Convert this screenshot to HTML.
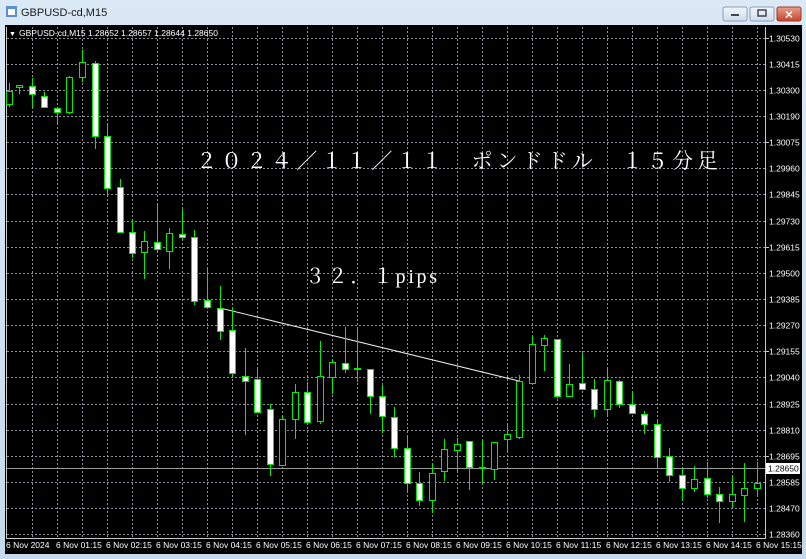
<!DOCTYPE html>
<html><head><meta charset="utf-8"><style>
html,body{margin:0;padding:0;width:806px;height:559px;overflow:hidden;background:#c9dcef}
svg{display:block}
</style></head><body>
<svg width="806" height="559" viewBox="0 0 806 559" xmlns="http://www.w3.org/2000/svg" font-family="Liberation Sans, sans-serif">
<defs>
<linearGradient id="tb" x1="0" y1="0" x2="0" y2="1"><stop offset="0" stop-color="#dbe8f6"/><stop offset="1" stop-color="#c5d8ec"/></linearGradient>
<linearGradient id="cl" x1="0" y1="0" x2="0" y2="1"><stop offset="0" stop-color="#e8a08f"/><stop offset="1" stop-color="#c8442c"/></linearGradient>
<linearGradient id="bt" x1="0" y1="0" x2="0" y2="1"><stop offset="0" stop-color="#f2f6fb"/><stop offset="1" stop-color="#cfdcea"/></linearGradient>
</defs>
<rect x="0" y="0" width="806" height="559" fill="url(#tb)"/>
<!-- title -->
<rect x="6" y="6" width="11" height="11" fill="#5d8fc8"/><rect x="8" y="9" width="7" height="6" fill="#fff"/>
<text x="21" y="16" font-size="11" fill="#1a1a1a">GBPUSD-cd,M15</text>
<rect x="723" y="7" width="24" height="14" rx="2" fill="url(#bt)" stroke="#8d9fb5"/><rect x="731" y="14" width="8" height="2" fill="#445"/>
<rect x="750" y="7" width="24" height="14" rx="2" fill="url(#bt)" stroke="#8d9fb5"/><rect x="758" y="10" width="8" height="6" fill="none" stroke="#445" stroke-width="1.5"/>
<rect x="777" y="7" width="24" height="14" rx="2" fill="url(#cl)" stroke="#9a3a2a"/><text x="789" y="18.5" font-size="11" font-weight="bold" fill="#fff" text-anchor="middle">✕</text>
<!-- chart area -->
<rect x="5" y="25" width="797" height="529" fill="#000"/>
<g shape-rendering="crispEdges">
<g stroke="#8a8f98" stroke-width="1" stroke-dasharray="2,2">
<line x1="7" y1="38.5" x2="765" y2="38.5"/><line x1="7" y1="64.5" x2="765" y2="64.5"/><line x1="7" y1="90.5" x2="765" y2="90.5"/><line x1="7" y1="116.5" x2="765" y2="116.5"/><line x1="7" y1="142.5" x2="765" y2="142.5"/><line x1="7" y1="168.5" x2="765" y2="168.5"/><line x1="7" y1="194.5" x2="765" y2="194.5"/><line x1="7" y1="221.5" x2="765" y2="221.5"/><line x1="7" y1="247.5" x2="765" y2="247.5"/><line x1="7" y1="273.5" x2="765" y2="273.5"/><line x1="7" y1="299.5" x2="765" y2="299.5"/><line x1="7" y1="325.5" x2="765" y2="325.5"/><line x1="7" y1="351.5" x2="765" y2="351.5"/><line x1="7" y1="377.5" x2="765" y2="377.5"/><line x1="7" y1="404.5" x2="765" y2="404.5"/><line x1="7" y1="430.5" x2="765" y2="430.5"/><line x1="7" y1="456.5" x2="765" y2="456.5"/><line x1="7" y1="482.5" x2="765" y2="482.5"/><line x1="7" y1="508.5" x2="765" y2="508.5"/><line x1="7" y1="534.5" x2="765" y2="534.5"/>
<line x1="32.5" y1="27" x2="32.5" y2="538"/><line x1="57.5" y1="27" x2="57.5" y2="538"/><line x1="82.5" y1="27" x2="82.5" y2="538"/><line x1="107.5" y1="27" x2="107.5" y2="538"/><line x1="132.5" y1="27" x2="132.5" y2="538"/><line x1="157.5" y1="27" x2="157.5" y2="538"/><line x1="182.5" y1="27" x2="182.5" y2="538"/><line x1="207.5" y1="27" x2="207.5" y2="538"/><line x1="232.5" y1="27" x2="232.5" y2="538"/><line x1="257.5" y1="27" x2="257.5" y2="538"/><line x1="282.5" y1="27" x2="282.5" y2="538"/><line x1="307.5" y1="27" x2="307.5" y2="538"/><line x1="332.5" y1="27" x2="332.5" y2="538"/><line x1="357.5" y1="27" x2="357.5" y2="538"/><line x1="382.5" y1="27" x2="382.5" y2="538"/><line x1="407.5" y1="27" x2="407.5" y2="538"/><line x1="432.5" y1="27" x2="432.5" y2="538"/><line x1="457.5" y1="27" x2="457.5" y2="538"/><line x1="482.5" y1="27" x2="482.5" y2="538"/><line x1="507.5" y1="27" x2="507.5" y2="538"/><line x1="532.5" y1="27" x2="532.5" y2="538"/><line x1="557.5" y1="27" x2="557.5" y2="538"/><line x1="582.5" y1="27" x2="582.5" y2="538"/><line x1="607.5" y1="27" x2="607.5" y2="538"/><line x1="632.5" y1="27" x2="632.5" y2="538"/><line x1="657.5" y1="27" x2="657.5" y2="538"/><line x1="682.5" y1="27" x2="682.5" y2="538"/><line x1="707.5" y1="27" x2="707.5" y2="538"/><line x1="732.5" y1="27" x2="732.5" y2="538"/><line x1="757.5" y1="27" x2="757.5" y2="538"/>
</g>
<!-- axis border -->
<g stroke="#c8c8c8" stroke-width="1"><line x1="6.5" y1="27" x2="6.5" y2="538"/><line x1="6" y1="538.5" x2="766" y2="538.5"/><line x1="765.5" y1="27" x2="765.5" y2="539"/></g>
<!-- price line -->
<line x1="7" y1="468.5" x2="765" y2="468.5" stroke="#9a9a9a"/>
</g>
<!-- trendline -->
<line x1="220" y1="308" x2="519" y2="381" stroke="#e8e8e8" stroke-width="1"/>
<!-- candles -->
<g stroke="#00ee00" stroke-width="1" shape-rendering="crispEdges">
<line x1="9.5" y1="83" x2="9.5" y2="107"/><rect x="6.5" y="91.5" width="6" height="13" fill="#000"/>
<line x1="19.5" y1="85" x2="19.5" y2="94"/><rect x="16.5" y="85.5" width="6" height="2" fill="#000"/>
<line x1="32.5" y1="78" x2="32.5" y2="107"/><rect x="29.5" y="86.5" width="6" height="8" fill="#fff"/>
<line x1="44.5" y1="92" x2="44.5" y2="107"/><rect x="41.5" y="96.5" width="6" height="11" fill="#fff"/>
<line x1="57.5" y1="108" x2="57.5" y2="124"/><rect x="54.5" y="108.5" width="6" height="4" fill="#fff"/>
<line x1="69.5" y1="76" x2="69.5" y2="114"/><rect x="66.5" y="77.5" width="6" height="35" fill="#000"/>
<line x1="82.5" y1="50" x2="82.5" y2="82"/><rect x="79.5" y="62.5" width="6" height="15" fill="#000"/>
<line x1="95.5" y1="61" x2="95.5" y2="149"/><rect x="92.5" y="63.5" width="6" height="73" fill="#fff"/>
<line x1="107.5" y1="125" x2="107.5" y2="195"/><rect x="104.5" y="136.5" width="6" height="52" fill="#fff"/>
<line x1="120.5" y1="179" x2="120.5" y2="232"/><rect x="117.5" y="187.5" width="6" height="45" fill="#fff"/>
<line x1="132.5" y1="220" x2="132.5" y2="258"/><rect x="129.5" y="232.5" width="6" height="21" fill="#fff"/>
<line x1="144.5" y1="231" x2="144.5" y2="279"/><rect x="141.5" y="241.5" width="6" height="11" fill="#000"/>
<line x1="157.5" y1="203" x2="157.5" y2="252"/><rect x="154.5" y="242.5" width="6" height="7" fill="#fff"/>
<line x1="169.5" y1="228" x2="169.5" y2="269"/><rect x="166.5" y="233.5" width="6" height="18" fill="#000"/>
<line x1="182.5" y1="209" x2="182.5" y2="240"/><rect x="179.5" y="234.5" width="6" height="3" fill="#fff"/>
<line x1="194.5" y1="230" x2="194.5" y2="305"/><rect x="191.5" y="237.5" width="6" height="64" fill="#fff"/>
<line x1="207.5" y1="268" x2="207.5" y2="307"/><rect x="204.5" y="300.5" width="6" height="7" fill="#fff"/>
<line x1="220.5" y1="286" x2="220.5" y2="340"/><rect x="217.5" y="308.5" width="6" height="23" fill="#fff"/>
<line x1="232.5" y1="307" x2="232.5" y2="378"/><rect x="229.5" y="330.5" width="6" height="43" fill="#fff"/>
<line x1="245.5" y1="348" x2="245.5" y2="435"/><rect x="242.5" y="376.5" width="6" height="5" fill="#fff"/>
<line x1="257.5" y1="369" x2="257.5" y2="412"/><rect x="254.5" y="379.5" width="6" height="33" fill="#fff"/>
<line x1="270.5" y1="404" x2="270.5" y2="476"/><rect x="267.5" y="409.5" width="6" height="55" fill="#fff"/>
<line x1="282.5" y1="416" x2="282.5" y2="465"/><rect x="279.5" y="419.5" width="6" height="46" fill="#000"/>
<line x1="295.5" y1="384" x2="295.5" y2="439"/><rect x="292.5" y="392.5" width="6" height="27" fill="#000"/>
<line x1="307.5" y1="382" x2="307.5" y2="422"/><rect x="304.5" y="392.5" width="6" height="30" fill="#fff"/>
<line x1="320.5" y1="341" x2="320.5" y2="424"/><rect x="317.5" y="376.5" width="6" height="45" fill="#000"/>
<line x1="332.5" y1="360" x2="332.5" y2="394"/><rect x="329.5" y="362.5" width="6" height="15" fill="#000"/>
<line x1="345.5" y1="327" x2="345.5" y2="373"/><rect x="342.5" y="363.5" width="6" height="6" fill="#fff"/>
<line x1="357.5" y1="327" x2="357.5" y2="382"/><rect x="354.5" y="368.5" width="6" height="1" fill="#fff"/>
<line x1="370.5" y1="369" x2="370.5" y2="414"/><rect x="367.5" y="369.5" width="6" height="27" fill="#fff"/>
<line x1="382.5" y1="385" x2="382.5" y2="433"/><rect x="379.5" y="396.5" width="6" height="20" fill="#fff"/>
<line x1="394.5" y1="407" x2="394.5" y2="457"/><rect x="391.5" y="417.5" width="6" height="31" fill="#fff"/>
<line x1="407.5" y1="435" x2="407.5" y2="492"/><rect x="404.5" y="448.5" width="6" height="35" fill="#fff"/>
<line x1="419.5" y1="472" x2="419.5" y2="506"/><rect x="416.5" y="483.5" width="6" height="17" fill="#fff"/>
<line x1="432.5" y1="463" x2="432.5" y2="513"/><rect x="429.5" y="473.5" width="6" height="27" fill="#000"/>
<line x1="444.5" y1="439" x2="444.5" y2="481"/><rect x="441.5" y="449.5" width="6" height="22" fill="#000"/>
<line x1="457.5" y1="438" x2="457.5" y2="472"/><rect x="454.5" y="444.5" width="6" height="6" fill="#000"/>
<line x1="469.5" y1="441" x2="469.5" y2="490"/><rect x="466.5" y="441.5" width="6" height="26" fill="#fff"/>
<line x1="482.5" y1="439" x2="482.5" y2="483"/><rect x="479.5" y="467.5" width="6" height="1" fill="#fff"/>
<line x1="494.5" y1="442" x2="494.5" y2="480"/><rect x="491.5" y="442.5" width="6" height="27" fill="#000"/>
<line x1="507.5" y1="423" x2="507.5" y2="453"/><rect x="504.5" y="434.5" width="6" height="5" fill="#000"/>
<line x1="519.5" y1="375" x2="519.5" y2="439"/><rect x="516.5" y="381.5" width="6" height="56" fill="#000"/>
<line x1="532.5" y1="335" x2="532.5" y2="383"/><rect x="529.5" y="344.5" width="6" height="39" fill="#000"/>
<line x1="544.5" y1="335" x2="544.5" y2="371"/><rect x="541.5" y="338.5" width="6" height="7" fill="#000"/>
<line x1="557.5" y1="339" x2="557.5" y2="398"/><rect x="554.5" y="339.5" width="6" height="57" fill="#fff"/>
<line x1="569.5" y1="364" x2="569.5" y2="397"/><rect x="566.5" y="384.5" width="6" height="12" fill="#000"/>
<line x1="582.5" y1="353" x2="582.5" y2="389"/><rect x="579.5" y="383.5" width="6" height="6" fill="#fff"/>
<line x1="594.5" y1="379" x2="594.5" y2="417"/><rect x="591.5" y="389.5" width="6" height="20" fill="#fff"/>
<line x1="607.5" y1="367" x2="607.5" y2="417"/><rect x="604.5" y="380.5" width="6" height="29" fill="#000"/>
<line x1="619.5" y1="380" x2="619.5" y2="408"/><rect x="616.5" y="381.5" width="6" height="23" fill="#fff"/>
<line x1="632.5" y1="392" x2="632.5" y2="413"/><rect x="629.5" y="404.5" width="6" height="9" fill="#fff"/>
<line x1="644.5" y1="411" x2="644.5" y2="434"/><rect x="641.5" y="414.5" width="6" height="10" fill="#fff"/>
<line x1="657.5" y1="419" x2="657.5" y2="467"/><rect x="654.5" y="424.5" width="6" height="33" fill="#fff"/>
<line x1="669.5" y1="448" x2="669.5" y2="482"/><rect x="666.5" y="456.5" width="6" height="19" fill="#fff"/>
<line x1="682.5" y1="467" x2="682.5" y2="501"/><rect x="679.5" y="475.5" width="6" height="13" fill="#fff"/>
<line x1="694.5" y1="466" x2="694.5" y2="492"/><rect x="691.5" y="479.5" width="6" height="9" fill="#000"/>
<line x1="707.5" y1="462" x2="707.5" y2="498"/><rect x="704.5" y="478.5" width="6" height="16" fill="#fff"/>
<line x1="719.5" y1="487" x2="719.5" y2="523"/><rect x="716.5" y="494.5" width="6" height="7" fill="#fff"/>
<line x1="732.5" y1="476" x2="732.5" y2="508"/><rect x="729.5" y="494.5" width="6" height="7" fill="#000"/>
<line x1="744.5" y1="463" x2="744.5" y2="522"/><rect x="741.5" y="488.5" width="6" height="7" fill="#000"/>
<line x1="757.5" y1="462" x2="757.5" y2="497"/><rect x="754.5" y="483.5" width="6" height="5" fill="#000"/>
</g>
<!-- header text -->
<text x="9" y="36" font-size="7" fill="#fff">▼</text>
<text x="19" y="36" font-size="8.5" fill="#fff">GBPUSD-cd,M15  1.28652 1.28657 1.28644 1.28650</text>
<!-- price labels -->
<g font-size="8.5" fill="#fff">
<text x="769" y="41.5">1.30530</text><text x="769" y="67.5">1.30415</text><text x="769" y="93.5">1.30300</text><text x="769" y="119.5">1.30190</text><text x="769" y="145.5">1.30075</text><text x="769" y="171.5">1.29960</text><text x="769" y="197.5">1.29845</text><text x="769" y="224.5">1.29730</text><text x="769" y="250.5">1.29615</text><text x="769" y="276.5">1.29500</text><text x="769" y="302.5">1.29385</text><text x="769" y="328.5">1.29270</text><text x="769" y="354.5">1.29155</text><text x="769" y="380.5">1.29040</text><text x="769" y="407.5">1.28925</text><text x="769" y="433.5">1.28810</text><text x="769" y="459.5">1.28695</text><text x="769" y="485.5">1.28585</text><text x="769" y="511.5">1.28470</text><text x="769" y="537.5">1.28360</text>
</g>
<g stroke="#c8c8c8" shape-rendering="crispEdges"><line x1="766" y1="38.5" x2="769" y2="38.5"/><line x1="766" y1="142.5" x2="769" y2="142.5"/><line x1="766" y1="247.5" x2="769" y2="247.5"/><line x1="766" y1="351.5" x2="769" y2="351.5"/><line x1="766" y1="456.5" x2="769" y2="456.5"/></g>
<rect x="766" y="463" width="34" height="11" fill="#fff"/>
<text x="768" y="471.5" font-size="8.5" fill="#000">1.28650</text>
<!-- time labels -->
<g font-size="8.5" fill="#fff">
<text x="6" y="548">6 Nov 2024</text><text x="56" y="548">6 Nov 01:15</text><text x="106" y="548">6 Nov 02:15</text><text x="156" y="548">6 Nov 03:15</text><text x="206" y="548">6 Nov 04:15</text><text x="256" y="548">6 Nov 05:15</text><text x="306" y="548">6 Nov 06:15</text><text x="356" y="548">6 Nov 07:15</text><text x="406" y="548">6 Nov 08:15</text><text x="456" y="548">6 Nov 09:15</text><text x="506" y="548">6 Nov 10:15</text><text x="556" y="548">6 Nov 11:15</text><text x="606" y="548">6 Nov 12:15</text><text x="656" y="548">6 Nov 13:15</text><text x="706" y="548">6 Nov 14:15</text><text x="756" y="548">6 Nov 15:15</text>
</g>
<!-- overlay text -->
<text x="196" y="168" font-size="21" fill="#fff" font-family="Liberation Serif, Noto Serif CJK SC, serif" textLength="522" lengthAdjust="spacing">２０２４／１１／１１　ポンドドル　１５分足</text>
<text x="305" y="283" font-size="20" fill="#fff" font-family="Liberation Serif, Noto Serif CJK SC, serif" textLength="132" lengthAdjust="spacing">３２．１pips</text>
</svg>
</body></html>
